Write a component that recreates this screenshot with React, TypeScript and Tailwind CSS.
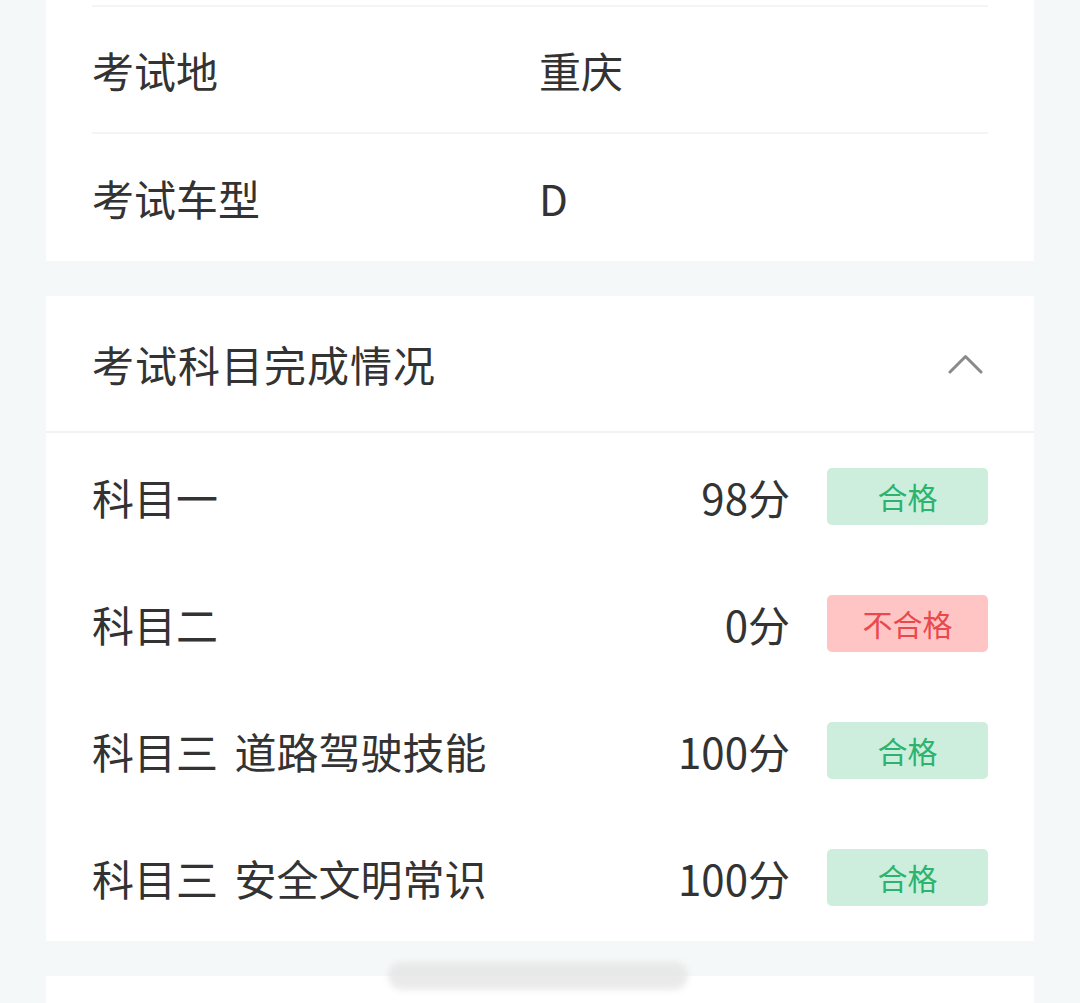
import React from "react";

type Subject = { name: string; score: number; passed: boolean };

const subjects: Subject[] = [
  { name: "科目一", score: 98, passed: true },
  { name: "科目二", score: 0, passed: false },
  { name: "科目三 道路驾驶技能", score: 100, passed: true },
  { name: "科目三 安全文明常识", score: 100, passed: true },
];

function InfoRow({ label, value, last }: { label: string; value: string; last?: boolean }) {
  return (
    <div className={`flex items-center h-[127px] ${last ? "" : "border-b-2 border-[#f3f4f4]"}`}>
      <span className="w-[447px]">{label}</span>
      <span>{value}</span>
    </div>
  );
}

function ChevronUp() {
  return (
    <svg width="36" height="22" viewBox="0 0 36 22" fill="none">
      <path d="M2 19 L17.5 3.5 L33 19" stroke="#8a8a8a" strokeWidth="3" strokeLinecap="round" strokeLinejoin="round" />
    </svg>
  );
}

function Badge({ passed }: { passed: boolean }) {
  return (
    <div
      className={`w-[161px] h-[57px] rounded-[5px] flex items-center justify-center text-[30px] ${
        passed ? "bg-[#cdeedd] text-[#2cb36f]" : "bg-[#ffc5c5] text-[#e9494c]"
      }`}
    >
      {passed ? "合格" : "不合格"}
    </div>
  );
}

export default function App() {
  return (
    <div
      className="relative w-[1080px] h-[1003px] overflow-hidden bg-[#f5f8f8] text-[#333333] text-[42px]"
      style={{ fontFamily: '"Noto Sans CJK SC", "Noto Sans", sans-serif' }}
    >
      {/* basic info card, scrolled so only its tail is visible */}
      <div className="mx-[46px] bg-white px-[46px]">
        <div className="h-[7px] border-b-2 border-[#f3f4f4]" />
        <InfoRow label="考试地" value="重庆" />
        <InfoRow label="考试车型" value="D" last />
      </div>

      {/* subject results */}
      <div className="mx-[46px] mt-[35px] bg-white">
        <div className="flex items-center justify-between h-[137px] pl-[46px] pr-[50px] border-b-2 border-[#f1f2f2]">
          <span className="tracking-[1px]">考试科目完成情况</span>
          <ChevronUp />
        </div>
        <div className="px-[46px]">
          {subjects.map((s) => (
            <div key={s.name} className="flex items-center h-[127px]">
              <span className="flex-1 [word-spacing:7px]">{s.name}</span>
              <span className="mr-[37px]">{s.score}分</span>
              <Badge passed={s.passed} />
            </div>
          ))}
        </div>
      </div>

      {/* next card peeking in */}
      <div className="mx-[46px] mt-[35px] bg-white h-[200px]" />

      {/* faint floating bar over the bottom */}
      <div className="absolute left-[388px] top-[962px] w-[300px] h-[28px] rounded-full bg-[#e2e2e2] opacity-70 blur-[3px]" />
    </div>
  );
}
